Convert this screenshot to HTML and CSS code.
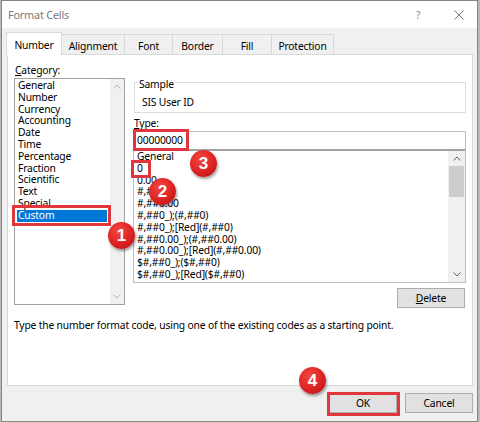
FILE: index.html
```html
<!DOCTYPE html>
<html>
<head>
<meta charset="utf-8">
<link rel="stylesheet" href="styles.css">
</head>
<body>
<div class="screen">
  <div class="window">
    <div class="titlebar">
      <span class="title">Format Cells</span>
      <span class="help">?</span>
      <span class="close"><svg width="10" height="10" viewBox="0 0 10 10"><path d="M0.5 0.5 L9.5 9.5 M9.5 0.5 L0.5 9.5" stroke="#7a7a7a" stroke-width="1" fill="none"/></svg></span>
    </div>
    <div class="content">
      <div class="tabs">
        <div class="tab active t-number">Number</div>
        <div class="tab t-align">Alignment</div>
        <div class="tab t-font">Font</div>
        <div class="tab t-border">Border</div>
        <div class="tab t-fill">Fill</div>
        <div class="tab t-prot">Protection</div>
      </div>
      <div class="panel">
        <div class="main">
          <div class="cat-col">
            <div class="cat-label"><u>C</u>ategory:</div>
            <div class="listbox cat-list">
              <ul class="items">
                <li>General</li>
                <li>Number</li>
                <li>Currency</li>
                <li>Accounting</li>
                <li>Date</li>
                <li>Time</li>
                <li>Percentage</li>
                <li>Fraction</li>
                <li>Scientific</li>
                <li>Text</li>
                <li>Special</li>
                <li class="selected">Custom</li>
              </ul>
              <div class="vscroll cat-scroll">
                <div class="arrow"><svg width="8" height="5" viewBox="0 0 8 5"><polyline points="0.5,4.5 4,1 7.5,4.5" fill="none" stroke="#b4b4b4" stroke-width="1"/></svg></div>
                <div class="arrow"><svg width="8" height="5" viewBox="0 0 8 5"><polyline points="0.5,0.5 4,4 7.5,0.5" fill="none" stroke="#b4b4b4" stroke-width="1"/></svg></div>
              </div>
            </div>
          </div>
          <div class="right-col">
            <fieldset class="sample">
              <legend>Sample</legend>
              <div class="sample-text">SIS User ID</div>
            </fieldset>
            <div class="type-label"><u>T</u>ype:</div>
            <div class="type-input">00000000</div>
            <div class="listbox fmt-list">
              <ul class="items">
                <li>General</li>
                <li>0</li>
                <li>0.00</li>
                <li>#,##0</li>
                <li>#,##0.00</li>
                <li>#,##0_);(#,##0)</li>
                <li>#,##0_);[Red](#,##0)</li>
                <li>#,##0.00_);(#,##0.00)</li>
                <li>#,##0.00_);[Red](#,##0.00)</li>
                <li>$#,##0_);($#,##0)</li>
                <li>$#,##0_);[Red]($#,##0)</li>
              </ul>
              <div class="vscroll fmt-scroll">
                <div class="arrow"><svg width="8" height="5" viewBox="0 0 8 5"><polyline points="0.5,4.5 4,1 7.5,4.5" fill="none" stroke="#606060" stroke-width="1"/></svg></div>
                <div class="thumb"></div>
                <div class="track-fill"></div>
                <div class="arrow"><svg width="8" height="5" viewBox="0 0 8 5"><polyline points="0.5,0.5 4,4 7.5,0.5" fill="none" stroke="#606060" stroke-width="1"/></svg></div>
              </div>
            </div>
            <div class="delete-row"><button class="btn"><u>D</u>elete</button></div>
          </div>
        </div>
        <p class="hint">Type the number format code, using one of the existing codes as a starting point.</p>
      </div>
      <div class="footer">
        <button class="btn">OK</button>
        <button class="btn">Cancel</button>
      </div>
    </div>
  </div>

  <div class="hl hl-custom"></div>
  <div class="hl hl-type"></div>
  <div class="hl hl-zero"></div>
  <div class="hl hl-ok"></div>

  <div class="badge b1">1</div>
  <div class="badge b2">2</div>
  <div class="badge b3">3</div>
  <div class="badge b4">4</div>
</div>
</body>
</html>
```

FILE: styles.css
```css
* { box-sizing: border-box; }
html, body { margin: 0; padding: 0; }
body {
  width: 480px;
  height: 422px;
  overflow: hidden;
  background: #b9b9b9;
  font-family: "Noto Sans", "Open Sans", "DejaVu Sans", sans-serif;
  font-size: 10.3px;
  letter-spacing: -0.17px;
  color: #000;
}
.screen { position: relative; width: 480px; height: 422px; }

.window {
  margin-left: 1px;
  width: 477px;
  height: 422px;
  border: 1px solid #858585;
  background: #f0f0f0;
  display: flex;
  flex-direction: column;
}

/* title bar */
.titlebar {
  height: 27px;
  flex: none;
  background: #fff;
  display: flex;
  align-items: center;
  padding-left: 6px;
}
.title { flex: 1; font-size: 10.8px; color: #7a7a7a; }
.help {
  width: 30px;
  margin-right: 8px;
  text-align: center;
  font-size: 10px;
  color: #8a8a8a;
}
.close {
  width: 36px;
  height: 27px;
  display: flex;
  align-items: center;
  justify-content: center;
}
.close svg { display: block; }

/* content */
.content {
  flex: 1;
  padding: 4px 4px 0 5px;
  display: flex;
  flex-direction: column;
}
.tabs {
  height: 22px;
  flex: none;
  display: flex;
  align-items: flex-end;
}
.tab {
  height: 20px;
  border: 1px solid #d9d9d9;
  border-bottom: 0;
  margin-left: -1px;
  background: #f0f0f0;
  text-align: center;
  padding-top: 3px;
  line-height: 16px;
  white-space: nowrap;
}
.tab.active {
  position: relative;
  z-index: 2;
  height: 23px;
  margin-bottom: -1px;
  background: #fff;
  padding-top: 4px;
}
.t-number { width: 56px; }
.t-align { width: 64px; }
.t-font { width: 49px; }
.t-border { width: 51px; }
.t-fill { width: 50px; }
.t-prot { width: 63px; }

.panel {
  height: 332px;
  flex: none;
  border: 1px solid #d9d9d9;
  background: #fff;
  padding: 8px 6px 0 6px;
}
.main { display: flex; }
.cat-col { width: 111px; flex: none; }
.right-col { width: 333px; flex: none; margin-left: 8px; }

.cat-label { height: 15px; line-height: 15px; margin-left: 1px; }

.listbox { display: flex; }
.items { list-style: none; margin: 0; flex: 1; }
.items li { line-height: 11.8px; height: 11.8px; white-space: nowrap; }

.cat-list {
  height: 227px;
  border: 1px solid #a3a3a3;
}
.cat-list .items { padding: 1px 0 0 0; }
.cat-list .items li { padding-left: 3px; }
.cat-list .items li.selected {
  margin: 0 3px 0 2px;
  padding-left: 1px;
  background: #0078d7;
  color: #fff;
}

.vscroll {
  flex: none;
  background: #f0f0f0;
  display: flex;
  flex-direction: column;
}
.cat-scroll { width: 14px; justify-content: space-between; }
.arrow {
  height: 15px;
  display: flex;
  align-items: center;
  justify-content: center;
}
.arrow svg { display: block; }

/* right column */
.sample {
  margin: 10px 0 0 1px;
  width: 332px;
  border: 1px solid #dcdcdc;
  padding: 4px 0 3px 7px;
  min-width: 0;
}
.sample legend {
  margin-left: -4px;
  padding: 4px 1px 0 1px;
  line-height: 14px;
}
.sample-text { line-height: 14px; }

.type-label { line-height: 14px; margin: 3px 0 1px 1px; }
.type-input {
  height: 18px;
  border: 1px solid #bdbdbd;
  border-bottom: 0;
  padding-left: 3px;
  line-height: 16px;
}
.fmt-list {
  height: 134px;
  border: 1px solid #bdbdbd;
  border-top: 2px solid #a2a2a2;
}
.fmt-list .items { padding: 0 0 0 3px; }
.fmt-scroll { width: 17px; }
.thumb {
  height: 31px;
  margin: 0 1px;
  background: #cdcdcd;
}
.track-fill { flex: 1; }

.delete-row {
  display: flex;
  justify-content: flex-end;
  margin-top: 5px;
  padding-right: 1px;
}
.btn {
  width: 68px;
  height: 20px;
  padding: 0;
  border: 1px solid #adadad;
  background: #e1e1e1;
  font-family: inherit;
  font-size: inherit;
  letter-spacing: inherit;
  color: #000;
  line-height: 18px;
  text-align: center;
}

.hint { margin: 10px 0 0 0; line-height: 14px; white-space: nowrap; }

.footer {
  display: flex;
  justify-content: flex-end;
  gap: 8px;
  margin-top: 7px;
}

/* annotation overlays */
.hl {
  position: absolute;
  border: 3px solid #e2363d;
}
.hl-custom { left: 12px; top: 205px; width: 99px; height: 21px; }
.hl-type { left: 133px; top: 129px; width: 56px; height: 22px; }
.hl-zero { left: 131px; top: 160px; width: 20px; height: 18px; }
.hl-ok { left: 327px; top: 392px; width: 73px; height: 24px; }

.badge {
  position: absolute;
  width: 27px;
  height: 27px;
  border-radius: 50%;
  background: radial-gradient(circle at 38% 32%, #f4463f 0%, #dc2222 55%, #b01012 100%);
  box-shadow: 1px 2px 3px rgba(0, 0, 0, 0.4);
  color: #fff;
  font-family: "Liberation Sans", Arial, sans-serif;
  font-weight: 700;
  font-size: 17px;
  letter-spacing: 0;
  display: flex;
  align-items: center;
  justify-content: center;
}
.b1 { left: 108px; top: 222px; }
.b2 { left: 149px; top: 178px; }
.b3 { left: 190px; top: 150px; }
.b4 { left: 299px; top: 367px; }
```
